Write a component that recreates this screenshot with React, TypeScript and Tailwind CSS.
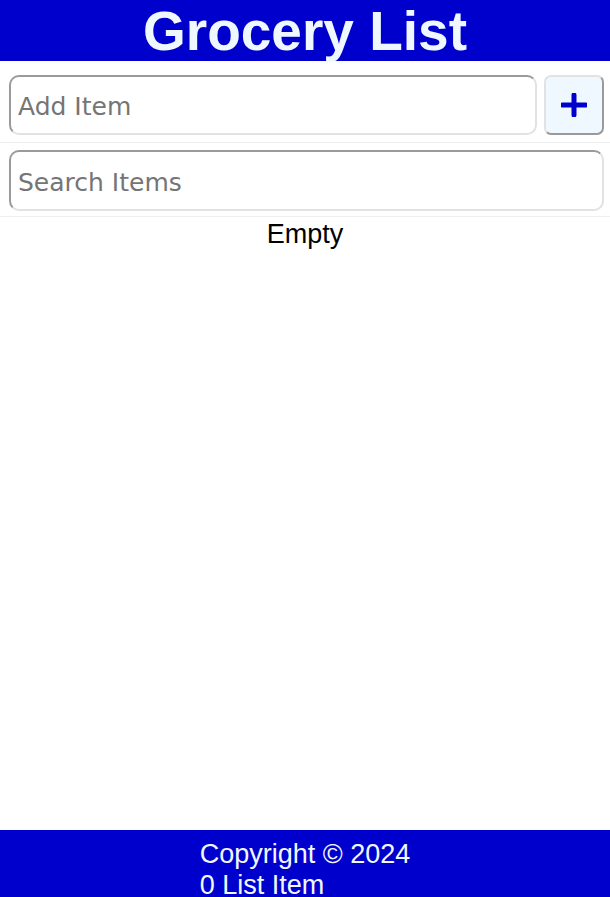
export default function App() {
  return (
    <div className="flex h-[897px] flex-col overflow-hidden bg-white font-['Liberation_Sans',Arial,sans-serif]">
      <header className="flex h-[61px] shrink-0 items-center justify-center bg-[#0000cd]">
        <h1 className="pt-[1px] text-[55px] font-bold leading-none text-[#f0f8ff]">Grocery List</h1>
      </header>

      <main className="flex-1">
        <form
          className="flex gap-[7px] border-b border-[#eeeeee] pt-[14px] pb-[7px] pl-[9px] pr-[6px]"
          onSubmit={(e) => e.preventDefault()}
        >
          <input
            type="text"
            placeholder="Add Item"
            className="h-[60px] min-w-0 flex-1 rounded-[10px] border-2 border-t-[#9a9a9a] border-l-[#9a9a9a] border-b-[#e2e2e2] border-r-[#e2e2e2] px-[7px] pt-[3px] font-['DejaVu_Sans',Verdana,sans-serif] text-[25px] outline-none placeholder:text-[#757575]"
          />
          <button
            type="submit"
            aria-label="Add Item"
            className="flex h-[60px] w-[60px] items-center justify-center rounded-[7px] border-2 border-t-[#e2e2e2] border-l-[#e2e2e2] border-b-[#9a9a9a] border-r-[#9a9a9a] bg-[#f0f8ff]"
          >
            <svg width="26" height="24" viewBox="0 0 26 24">
              <path d="M13 2v20M1.5 12h23" stroke="#0000cd" strokeWidth="5" strokeLinecap="round" />
            </svg>
          </button>
        </form>

        <form
          className="border-b border-[#eeeeee] pt-[7px] pb-[5px] pl-[9px] pr-[6px]"
          onSubmit={(e) => e.preventDefault()}
        >
          <input
            type="text"
            placeholder="Search Items"
            className="h-[61px] w-full rounded-[10px] border-2 border-t-[#9a9a9a] border-l-[#9a9a9a] border-b-[#e2e2e2] border-r-[#e2e2e2] px-[7px] pt-[3px] font-['DejaVu_Sans',Verdana,sans-serif] text-[25px] outline-none placeholder:text-[#757575]"
          />
        </form>

        <p className="pt-[2px] text-center text-[27px] leading-[31px] text-black">Empty</p>
      </main>

      <footer className="flex h-[67px] shrink-0 justify-center overflow-hidden bg-[#0000cd] pt-[9px] text-[27px] leading-[31px] text-[#f0f8ff]">
        <div className="flex flex-col items-start">
          <p>Copyright &copy; 2024</p>
          <p>0 List Item</p>
        </div>
      </footer>
    </div>
  );
}
